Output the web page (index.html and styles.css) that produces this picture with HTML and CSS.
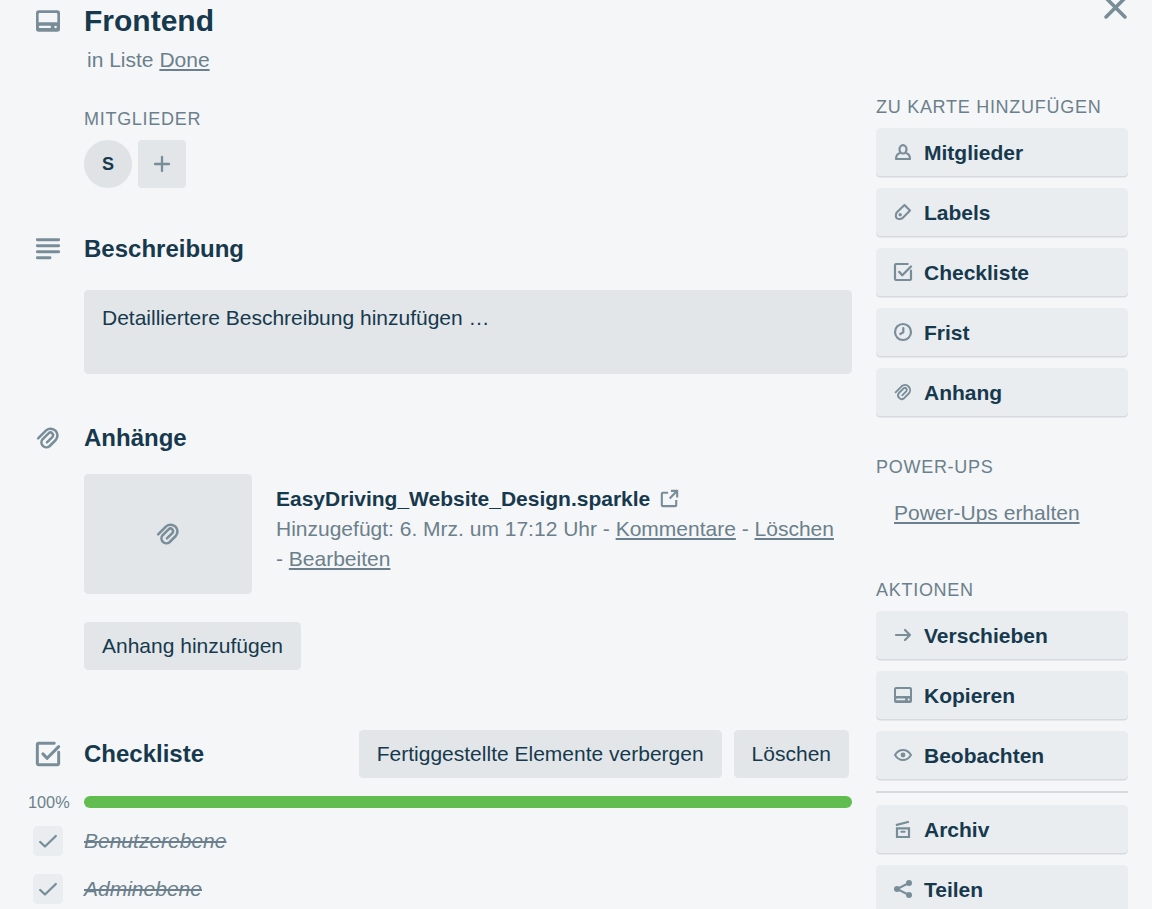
FILE: index.html
```html
<!DOCTYPE html>
<html lang="de">
<head>
<meta charset="utf-8">
<title>Frontend</title>
<link rel="stylesheet" href="styles.css">
</head>
<body>
<svg class="sprite" aria-hidden="true">
  <symbol id="card" viewBox="0 0 24 24"><path fill-rule="evenodd" d="M5 4h14a2 2 0 0 1 2 2v12a2 2 0 0 1-2 2H5a2 2 0 0 1-2-2V6a2 2 0 0 1 2-2zm.8 2a.8.8 0 0 0-.8.8V13h14V6.800a.8.8 0 0 0-.8-.8zM6 15.500a.9.9 0 0 0 0 1.800h7.400a.9.9 0 0 0 0-1.800zm11.700 0a.95.95 0 1 0 .01 0z"/></symbol>
  <symbol id="lines" viewBox="0 0 24 24"><path fill="none" stroke="currentColor" stroke-width="2.200" stroke-linecap="round" d="M4 5.100h16M4 9.600h16M4 14.100h16M4 18.600h9.500"/></symbol>
  <symbol id="clip" viewBox="0 0 24 24"><path fill="none" stroke="currentColor" stroke-width="1.900" stroke-linecap="round" stroke-linejoin="round" d="M4.600 12.300 10.600 6.300A5.100 5.100 0 0 1 17.800 13.500L13.100 18.200A3.700 3.700 0 0 1 7.900 13L12.600 8.300A2 2 0 0 1 15.400 11.100L11.200 15.300"/></symbol>
  <symbol id="check" viewBox="0 0 24 24"><path fill="none" stroke="currentColor" stroke-width="2.200" stroke-linecap="round" d="M16.700 4H5a1 1 0 0 0-1 1v14a1 1 0 0 0 1 1h14a1 1 0 0 0 1-1v-8.300"/><path fill="none" stroke="currentColor" stroke-width="2.300" stroke-linecap="round" stroke-linejoin="round" d="M8.200 11.900 11.300 15.200 20 6.500"/></symbol>
  <symbol id="tick" viewBox="0 0 24 24"><path fill="none" stroke="currentColor" stroke-width="2.300" stroke-linecap="round" stroke-linejoin="round" d="M4.200 13 9 17.500 19.800 7"/></symbol>
  <symbol id="person" viewBox="0 0 24 24"><path fill="none" stroke="currentColor" stroke-width="2.200" stroke-linejoin="round" d="M9.500 13C6.600 13.600 5 15.800 5 19H19C19 15.800 17.400 13.600 14.500 13"/><ellipse cx="12" cy="9.300" rx="3.500" ry="4.200" fill="none" stroke="currentColor" stroke-width="2.200"/></symbol>
  <symbol id="tag" viewBox="0 0 24 24"><path fill="none" stroke="currentColor" stroke-width="2.100" stroke-linejoin="round" d="M13.500 5 19 10.600 11.900 17.700C10.600 19 8.700 19.200 6.900 18.800 5 18.200 4.700 15.700 5.100 13.900 5.300 13.200 5.700 12.600 6.200 12.100Z"/><circle cx="9.200" cy="14.800" r="1.700"/></symbol>
  <symbol id="clock" viewBox="0 0 24 24"><circle cx="12" cy="12" r="8" fill="none" stroke="currentColor" stroke-width="2.200"/><path fill="none" stroke="currentColor" stroke-width="2.200" stroke-linecap="round" stroke-linejoin="round" d="M12.300 8v4.300l-3 1.700"/></symbol>
  <symbol id="arrow" viewBox="0 0 24 24"><path fill="none" stroke="currentColor" stroke-width="2.200" stroke-linecap="round" stroke-linejoin="round" d="M5 12h14M14 7l5 5-5 5"/></symbol>
  <symbol id="eye" viewBox="0 0 24 24"><path fill="none" stroke="currentColor" stroke-width="2" stroke-linejoin="round" d="M4 12C6 8.700 8.600 7 12 7s6 1.700 8 5c-2 3.300-4.600 5-8 5s-6-1.700-8-5z"/><circle cx="12" cy="12" r="2.400"/></symbol>
  <symbol id="archive" viewBox="0 0 24 24"><path fill="none" stroke="currentColor" stroke-width="2.200" d="M6 11.300h12v8.700H6zM4.900 8.100 17.900 4.700"/><path fill="none" stroke="currentColor" stroke-width="2" stroke-linecap="round" d="M10.300 14.700h3.400"/></symbol>
  <symbol id="share" viewBox="0 0 24 24"><path fill="none" stroke="currentColor" stroke-width="2" d="M18 6 6 12l12 6"/><circle cx="18" cy="6" r="3"/><circle cx="6" cy="12" r="3"/><circle cx="18" cy="18" r="3"/></symbol>
  <symbol id="external" viewBox="0 0 24 24"><path fill="none" stroke="currentColor" stroke-width="2.200" stroke-linejoin="round" d="M10.500 6H5a1 1 0 0 0-1 1v12a1 1 0 0 0 1 1h13a1 1 0 0 0 1-1v-5.500"/><path fill="none" stroke="currentColor" stroke-width="2.200" d="M13.500 4h7.500M20 3v8M20 4 12.200 12"/></symbol>
  <symbol id="plus" viewBox="0 0 24 24"><path fill="none" stroke="currentColor" stroke-width="2.300" stroke-linecap="round" d="M12 5v14M5 12h14"/></symbol>
  <symbol id="close" viewBox="0 0 24 24"><path fill="none" stroke="currentColor" stroke-width="3.200" stroke-linecap="round" d="M3.600 3.600 20.400 20.400M20.400 3.600 3.600 20.400"/></symbol>
</svg>
<div class="window">
  <main class="main">
    <header class="row head">
      <svg class="icon-lg"><use href="#card"/></svg>
      <h1 class="title">Frontend</h1>
    </header>
    <p class="in-list">in Liste <a class="link">Done</a></p>

    <section class="members">
      <h3 class="label">Mitglieder</h3>
      <div class="member-list">
        <span class="avatar">S</span>
        <span class="add-member"><svg class="icon"><use href="#plus"/></svg></span>
      </div>
    </section>

    <section class="description">
      <div class="row">
        <svg class="icon-lg"><use href="#lines"/></svg>
        <h2 class="heading">Beschreibung</h2>
      </div>
      <div class="textarea">Detailliertere Beschreibung hinzufügen …</div>
    </section>

    <section class="attachments">
      <div class="row">
        <svg class="icon-lg"><use href="#clip"/></svg>
        <h2 class="heading">Anhänge</h2>
      </div>
      <div class="attachment">
        <div class="thumb"><svg class="icon-lg"><use href="#clip"/></svg></div>
        <div class="details">
          <div class="file"><span>EasyDriving_Website_Design.sparkle</span><svg class="icon-ext"><use href="#external"/></svg></div>
          <p class="meta">Hinzugefügt: 6. Mrz. um 17:12 Uhr - <a class="link">Kommentare</a> - <a class="link">Löschen</a> - <a class="link">Bearbeiten</a></p>
        </div>
      </div>
      <a class="button add-attachment">Anhang hinzufügen</a>
    </section>

    <section class="checklist">
      <div class="row checklist-head">
        <svg class="icon-lg"><use href="#check"/></svg>
        <h2 class="heading">Checkliste</h2>
        <a class="button">Fertiggestellte Elemente verbergen</a>
        <a class="button">Löschen</a>
      </div>
      <div class="progress"><span class="percent">100%</span><div class="bar"></div></div>
      <div class="item"><span class="box"><svg class="icon"><use href="#tick"/></svg></span><span class="item-text">Benutzerebene</span></div>
      <div class="item"><span class="box"><svg class="icon"><use href="#tick"/></svg></span><span class="item-text">Adminebene</span></div>
    </section>
  </main>

  <aside class="sidebar">
    <svg class="close"><use href="#close"/></svg>
    <h3 class="label">Zu Karte hinzufügen</h3>
    <nav class="actions">
      <a class="action"><svg class="icon"><use href="#person"/></svg>Mitglieder</a>
      <a class="action"><svg class="icon"><use href="#tag"/></svg>Labels</a>
      <a class="action"><svg class="icon"><use href="#check"/></svg>Checkliste</a>
      <a class="action"><svg class="icon"><use href="#clock"/></svg>Frist</a>
      <a class="action"><svg class="icon"><use href="#clip"/></svg>Anhang</a>
    </nav>
    <h3 class="label power">Power-Ups</h3>
    <a class="link get-power">Power-Ups erhalten</a>
    <h3 class="label deeds">Aktionen</h3>
    <nav class="actions">
      <a class="action"><svg class="icon"><use href="#arrow"/></svg>Verschieben</a>
      <a class="action"><svg class="icon"><use href="#card"/></svg>Kopieren</a>
      <a class="action"><svg class="icon"><use href="#eye"/></svg>Beobachten</a>
    </nav>
    <hr class="divider">
    <nav class="actions">
      <a class="action"><svg class="icon"><use href="#archive"/></svg>Archiv</a>
      <a class="action"><svg class="icon"><use href="#share"/></svg>Teilen</a>
    </nav>
  </aside>
</div>
</body>
</html>
```
FILE: styles.css
```css
* { box-sizing: border-box; }

body {
  margin: 0;
  background: #f5f6f7;
  color: #17394d;
  font: 21px/30px "Liberation Sans", Arial, sans-serif;
}

h1, h2, h3, p { margin: 0; }

svg { display: block; flex: none; fill: currentColor; color: #798d99; }

.sprite { display: none; }
.icon { width: 24px; height: 24px; }
.icon-lg { width: 32px; height: 32px; }

.window {
  display: grid;
  grid-template-columns: 852px 252px;
  column-gap: 24px;
  height: 909px;
  overflow: hidden;
}

.main { padding-top: 6px; }

.row {
  display: flex;
  align-items: center;
  gap: 20px;
  height: 30px;
  padding-left: 32px;
}

.row > .icon-lg { margin-bottom: 1px; }

.title { font-size: 30px; line-height: 30px; }
.heading { font-size: 24px; line-height: 30px; }

.label {
  color: #6b808c;
  font-size: 18px;
  font-weight: 400;
  line-height: 22px;
  letter-spacing: 0.72px;
  text-transform: uppercase;
}

.link {
  color: #6b808c;
  text-decoration: underline 2px;
  text-underline-offset: 2px;
  text-decoration-skip-ink: none;
}

.in-list {
  margin: 12px 0 0 87px;
  color: #6b808c;
  line-height: 24px;
}

.members { margin: 36px 0 0 84px; }

.member-list { display: flex; gap: 6px; margin-top: 10px; }

.avatar, .add-member {
  display: flex;
  align-items: center;
  justify-content: center;
  width: 48px;
  height: 48px;
}

.avatar {
  border-radius: 50%;
  background: #dfe3e6;
  font-size: 18px;
  font-weight: 700;
}

.add-member { border-radius: 4px; background: #e2e6e9; }

.description { margin-top: 46px; }

.textarea {
  height: 84px;
  margin: 26px 0 0 84px;
  padding: 13px 18px;
  border-radius: 4.500px;
  background: #e2e6e9;
}

.attachments { margin-top: 49px; }

.attachment { display: flex; gap: 24px; margin: 21px 0 0 84px; }

.thumb {
  display: flex;
  flex: none;
  align-items: center;
  justify-content: center;
  width: 168px;
  height: 120px;
  border-radius: 4.500px;
  background: #e2e6e9;
}

.details { padding: 10px 12px 0 0; }

.file { display: flex; align-items: center; gap: 8px; font-weight: 700; }
.icon-ext { width: 23px; height: 23px; margin-bottom: 2px; }

.meta { color: #6b808c; }

.button {
  display: inline-flex;
  align-items: center;
  height: 48px;
  padding: 0 18px;
  border-radius: 4.500px;
  background: #e2e6e9;
  white-space: nowrap;
}

.add-attachment { margin: 28px 0 0 84px; vertical-align: top; }

.checklist { margin-top: 60px; }

.checklist-head { height: 48px; padding-right: 3px; }
.checklist-head .heading { flex: 1; }
.checklist-head .button + .button { margin-left: -8px; }

.progress { display: flex; align-items: center; height: 12px; margin-top: 18px; }

.percent { width: 84px; padding-left: 28px; color: #6b808c; font-size: 16.300px; }

.bar { flex: 1; height: 12px; border-radius: 6px; background: #61bd4f; }

.item { display: flex; align-items: center; gap: 21px; height: 30px; margin: 18px 0 0 33px; }

.box {
  display: flex;
  align-items: center;
  justify-content: center;
  width: 30px;
  height: 30px;
  border-radius: 4.500px;
  background: #eaedf0;
}

.item-text { color: #6b808c; font-style: italic; text-decoration: line-through; }

.close { width: 27px; height: 27px; margin: -6px -1px 75px auto; }

.actions { display: grid; gap: 12px; margin-top: 10px; }

.action {
  display: flex;
  align-items: center;
  gap: 9px;
  height: 48px;
  padding: 1px 0 0 15px;
  border-radius: 4.500px;
  background: #eaedf0;
  box-shadow: 0 1.500px 0 #d6dade;
  font-weight: 700;
}

.action .icon { margin-bottom: 2px; }

.power { margin-top: 40px; }
.get-power { display: block; margin: 20px 0 0 18px; }
.deeds { margin-top: 51px; }

.divider { height: 2px; margin: 12px 0; border: 0; background: #d6dade; }
.divider + .actions { margin-top: 12px; }
```
